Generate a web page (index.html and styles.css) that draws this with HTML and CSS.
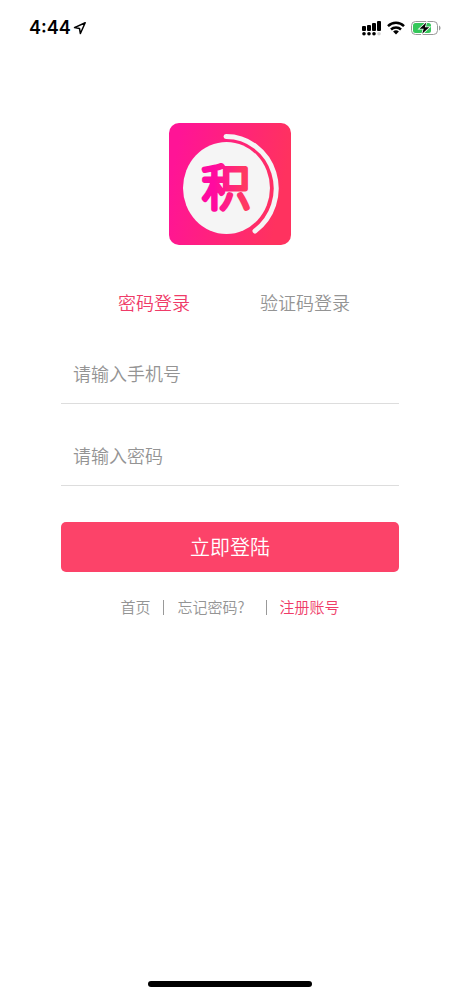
FILE: index.html
```html
<!DOCTYPE html>
<html lang="zh-CN">
<head>
<meta charset="utf-8">
<meta name="viewport" content="width=device-width, initial-scale=1">
<title>登录</title>
<link rel="stylesheet" href="styles.css">
</head>
<body>
<header class="status">
  <div class="status-side">
    <span class="time">4:44</span>
    <svg class="location" width="14" height="14" viewBox="0 0 14 14" aria-hidden="true"><path d="M12.2 1.8 1.5 6.6l5 .9.9 5z" fill="none" stroke="#000" stroke-width="1.5" stroke-linejoin="round"/></svg>
  </div>
  <div class="status-side icons">
    <svg width="19" height="15" viewBox="0 0 19 15" aria-hidden="true">
      <rect y="5" width="4" height="5" rx="1"/><rect x="5" y="4" width="4" height="6" rx="1"/><rect x="10" y="2" width="4" height="8" rx="1"/><rect x="15" width="4" height="10" rx="1"/>
      <circle cx="2" cy="12.700" r="1.800"/><circle cx="7" cy="12.700" r="1.800"/><circle cx="12" cy="12.700" r="1.800"/><circle cx="17" cy="12.700" r="1.800" fill="#d0d0d0"/>
    </svg>
    <svg width="18" height="14" viewBox="0 0 18 14" aria-hidden="true"><g fill="none" stroke="#000" stroke-width="2.5"><path d="M1 5.1a11.4 11.4 0 0 1 16 0"/><path d="M4 8.5a7.2 7.2 0 0 1 10 0"/></g><path d="M9 13.5 6.1 10.6a4.1 4.1 0 0 1 5.8 0z"/></svg>
    <svg width="30" height="14" viewBox="0 0 30 14" aria-hidden="true"><rect x=".5" y=".5" width="26" height="13" rx="4" fill="#fff" stroke="#999"/><rect x="2" y="2" width="18" height="10" rx="2.5" fill="#35c75a"/><path d="M28 4.5c2 .8 2 4.200 0 5z" fill="#999"/><path d="M15.300 1.500 8.500 7.800h4.200l-1.500 5 7-6.500h-4.300z" stroke="#fff" stroke-width="1.600" paint-order="stroke"/></svg>
  </div>
</header>
<main class="login">
  <svg class="logo" width="122" height="122" viewBox="0 0 122 122" role="img" aria-label="积">
    <defs>
      <linearGradient id="tile" x1="0" y1="0" x2="1" y2=".2"><stop offset=".1" stop-color="#ff1496"/><stop offset="1" stop-color="#ff325f"/></linearGradient>
      <linearGradient id="glyph" x1="0" y1="0" x2="1" y2="0"><stop offset=".25" stop-color="#ff0aa0"/><stop offset=".9" stop-color="#ff3a60"/></linearGradient>
    </defs>
    <rect width="122" height="122" rx="10" fill="url(#tile)"/>
    <ellipse cx="57.500" cy="65" rx="43.500" ry="46" fill="#f5f5f5"/>
    <path d="M57 13.500A50 52 0 0 1 86 108" fill="none" stroke="#f5f5f5" stroke-width="5" stroke-linecap="round"/>
    <text class="logo-char" x="57" y="82" text-anchor="middle" fill="url(#glyph)" stroke="url(#glyph)">积</text>
  </svg>
  <nav class="tabs">
    <button type="button" class="tab active">密码登录</button>
    <button type="button" class="tab">验证码登录</button>
  </nav>
  <form class="form">
    <input class="field" type="tel" placeholder="请输入手机号" aria-label="手机号">
    <input class="field" type="password" placeholder="请输入密码" aria-label="密码">
    <button class="submit" type="submit">立即登陆</button>
  </form>
  <nav class="links">
    <a href="#home">首页</a>
    <span class="divider"></span>
    <a class="forgot" href="#forgot">忘记密码?</a>
    <span class="divider"></span>
    <a class="register" href="#register">注册账号</a>
  </nav>
</main>
<footer class="home-area"><div class="home-bar"></div></footer>
</body>
</html>
```
FILE: styles.css
```css
* { box-sizing: border-box; }
body {
  margin: 0;
  min-height: 100vh;
  display: flex;
  flex-direction: column;
  background: #fff;
  color: #949494;
  font-family: "Noto Sans CJK SC", sans-serif;
  font-weight: 350;
}
button, input { font: inherit; color: inherit; border: 0; border-radius: 0; background: none; padding: 0; }
a { color: inherit; text-decoration: none; }

.status {
  height: 56px;
  padding: 0 19px 0 29px;
  display: flex;
  align-items: center;
  justify-content: space-between;
}
.status-side { display: flex; align-items: center; gap: 2px; }
.icons { gap: 6px; }
.time { font: 600 18px/24px Inter, sans-serif; color: #000; }

.login {
  flex: 1;
  padding: 67px 61px 0;
  display: flex;
  flex-direction: column;
}
.logo { align-self: center; }
.logo-char {
  font-family: "Noto Sans CJK SC", sans-serif;
  font-size: 48px;
  font-weight: 100;
  stroke-width: 5px;
  stroke-linejoin: round;
}

.tabs {
  margin-top: 43px;
  padding: 0 49px 0 57px;
  display: flex;
  justify-content: space-between;
}
.tab { font-size: 18px; line-height: 28px; }
.active { color: #ef3b68; }

.form { margin-top: 28px; display: flex; flex-direction: column; }
.field {
  width: 100%;
  height: 60px;
  margin-bottom: 22px;
  padding: 0 12px 2px;
  border-bottom: 1px solid #ddd;
  font-size: 18px;
  outline: 0;
}
.field::placeholder { color: #949494; opacity: 1; }
.submit {
  height: 50px;
  margin-top: 14px;
  padding-bottom: 2px;
  border-radius: 5px;
  background: #fc4369;
  color: #fff;
  font-size: 20px;
}

.links {
  margin-top: 23px;
  display: flex;
  align-items: center;
  justify-content: center;
  gap: 13px;
  font-size: 15px;
  line-height: 24px;
}
.divider { width: 1px; height: 15px; background: #999; }
.forgot { padding-right: 8px; }
.register { color: #ef3b68; }

.home-area { padding: 0 0 9px; display: flex; justify-content: center; }
.home-bar { width: 164px; height: 6px; border-radius: 3px; background: #000; }
```
